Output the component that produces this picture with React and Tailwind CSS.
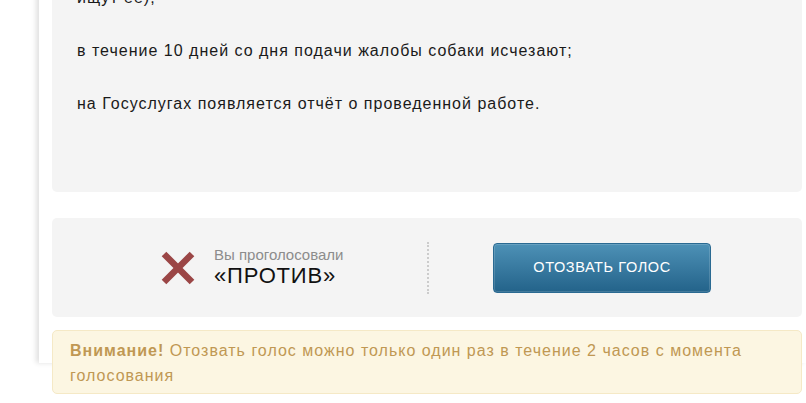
import React from "react";

const VoteCross = () => (
  <svg width="36" height="36" viewBox="0 0 36 36">
    <path d="M4 4 L32 32 M32 4 L4 32" stroke="#9b4646" strokeWidth="6.5" strokeLinecap="butt" />
  </svg>
);

export default function App() {
  return (
    <div className="w-[806px] h-[403px] overflow-hidden bg-white font-['Liberation_Sans',Arial,sans-serif]">
      <div className="ml-[39px] h-full pl-[13px] pr-[4px] shadow-[-3px_0_5px_rgba(0,0,0,0.12)] bg-white">
        {/* описание петиции */}
        <div className="-mt-[40px] bg-[#f4f4f4] rounded-b-[5px] pl-[25px] pt-[28px] pb-[78px] text-[16px] leading-[20px] tracking-[1px] text-[#1a1a1a]">
          <div className="flex flex-col gap-[33px]">
            <p>ищут её);</p>
            <p>в течение 10 дней со дня подачи жалобы собаки исчезают;</p>
            <p>на Госуслугах появляется отчёт о проведенной работе.</p>
          </div>
        </div>

        {/* результат голосования */}
        <div className="mt-[26px] h-[99px] bg-[#f4f4f4] rounded-[5px] flex items-center">
          <div className="w-1/2 flex items-center pl-[108px]">
            <VoteCross />
            <div className="ml-[18px] flex flex-col">
              <span className="text-[15px] leading-[16px] text-[#8c8c8c]">Вы проголосовали</span>
              <span className="text-[22px] leading-[26px] text-[#111] tracking-[0.8px]">«ПРОТИВ»</span>
            </div>
          </div>
          <div className="h-[52px] border-l-2 border-dotted border-[#cccccc]" />
          <div className="flex-1 pl-[64px]">
            <button className="w-[218px] h-[50px] rounded-[4px] border border-[#2a6a92] bg-gradient-to-b from-[#4d91b6] to-[#23638a] shadow-[inset_0_0_0_1px_rgba(255,255,255,0.15)] text-white text-[14.5px] tracking-[0.6px]">
              ОТОЗВАТЬ ГОЛОС
            </button>
          </div>
        </div>

        {/* предупреждение */}
        <div className="mt-[13px] bg-[#fcf6e2] border border-[#f5e9c6] rounded-[5px] pl-[17px] pr-[20px] pt-[7px] pb-[5px] text-[16px] leading-[25px] tracking-[1px] text-[#c09853]">
          <b>Внимание!</b> Отозвать голос можно только один раз в течение 2 часов с момента
          <br />
          голосования
        </div>
      </div>
    </div>
  );
}
